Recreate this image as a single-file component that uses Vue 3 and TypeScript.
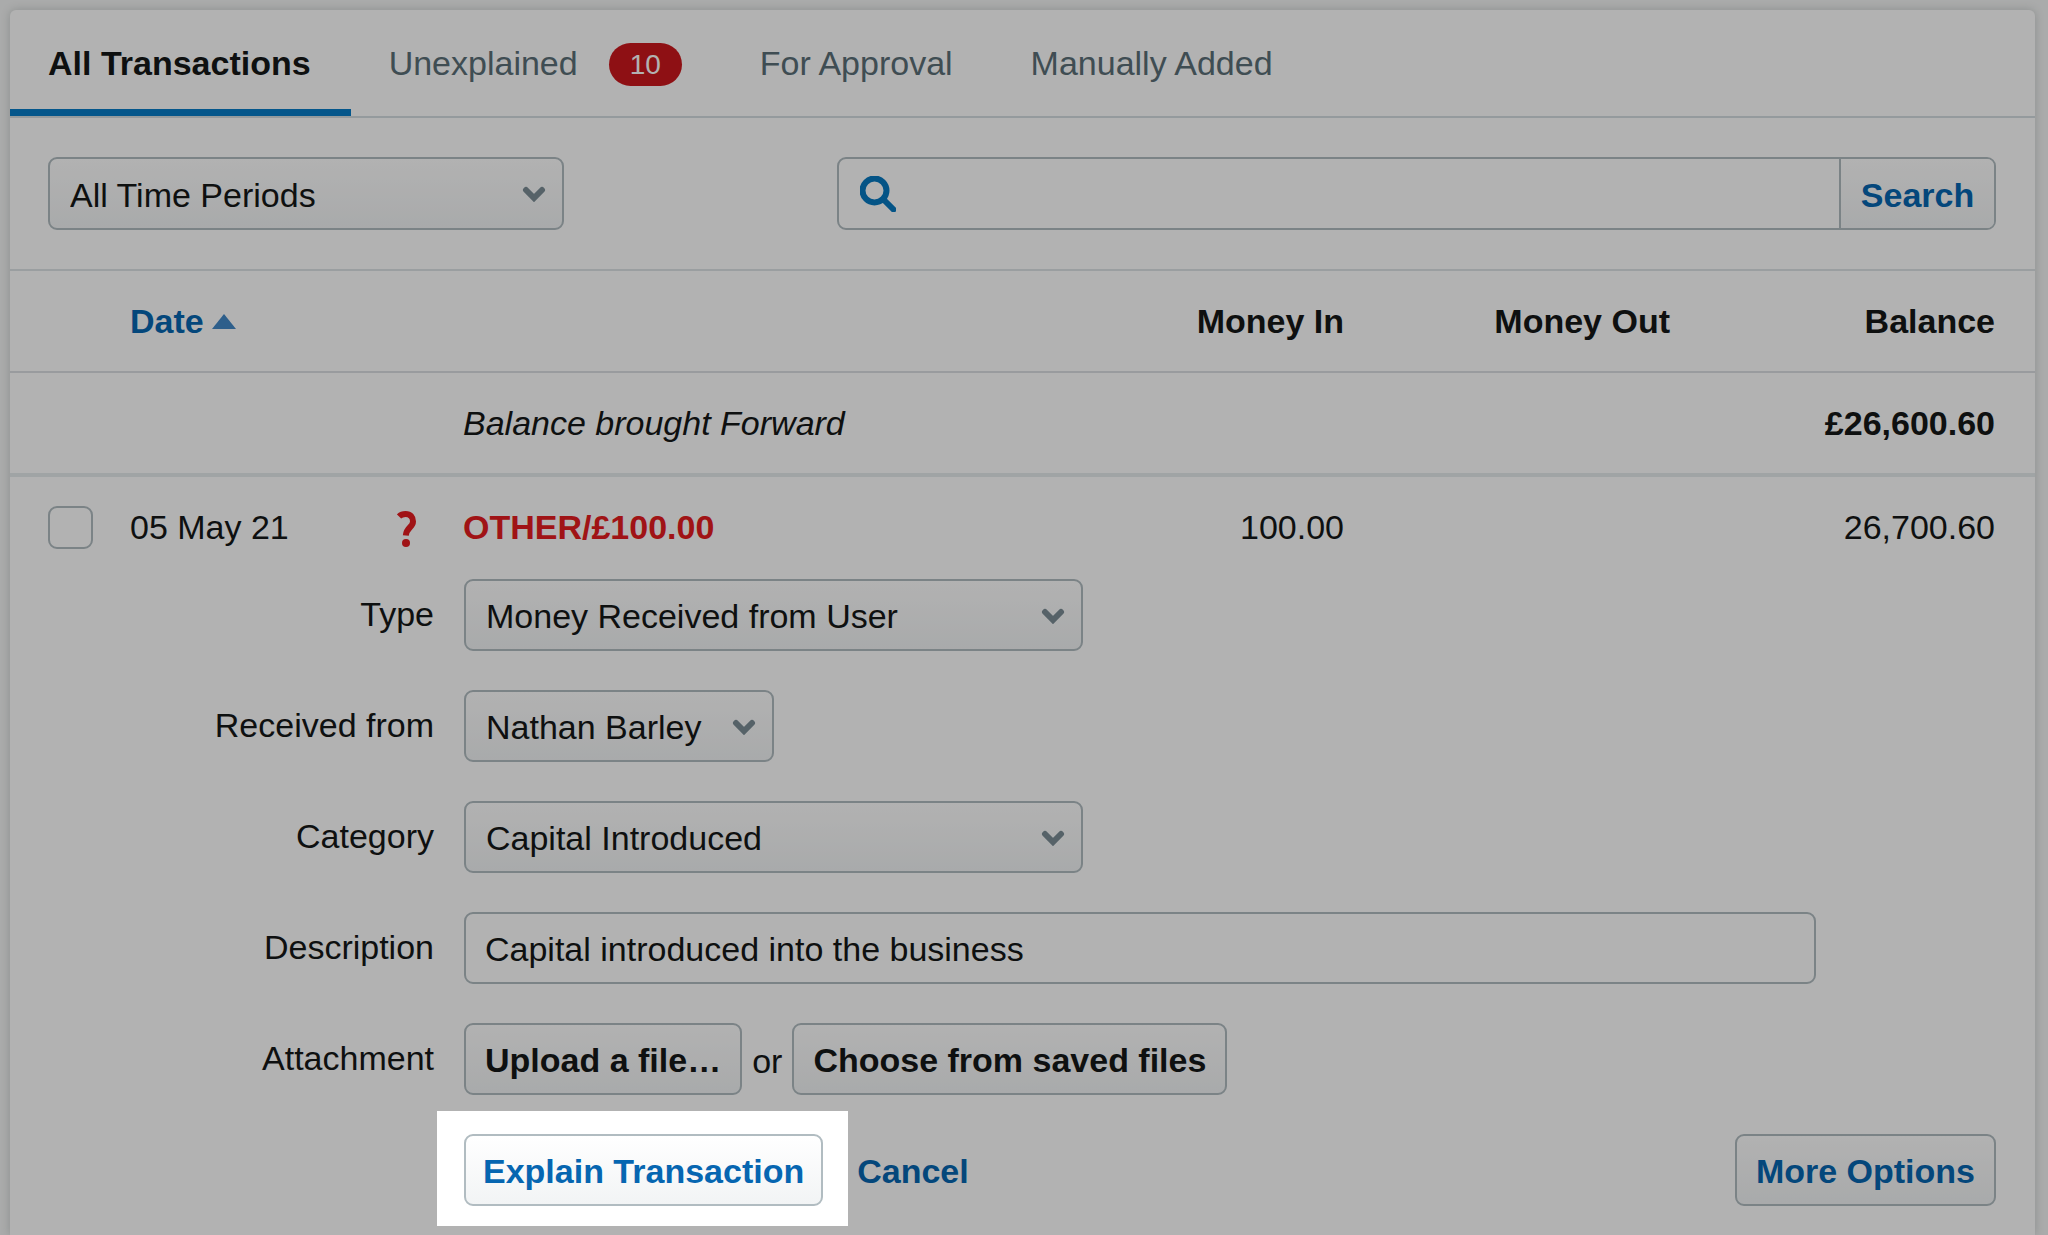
<script setup lang="ts">
import { ref } from 'vue'

interface Tab {
  label: string
  count?: number
}

const tabs: Tab[] = [
  { label: 'All Transactions' },
  { label: 'Unexplained', count: 10 },
  { label: 'For Approval' },
  { label: 'Manually Added' },
]
const activeTab = ref('All Transactions')

const period = ref('All Time Periods')
const query = ref('')
const selected = ref(false)
const kind = ref('Money Received from User')
const person = ref('Nathan Barley')
const category = ref('Capital Introduced')
const description = ref('Capital introduced into the business')
</script>

<template>
  <div class="page">
    <main class="card">
      <nav class="tabs">
        <a
          v-for="tab in tabs"
          :key="tab.label"
          href="#"
          class="tab"
          :class="{ active: tab.label === activeTab }"
          @click.prevent="activeTab = tab.label"
        >
          <span>{{ tab.label }}</span>
          <span v-if="tab.count" class="badge">{{ tab.count }}</span>
        </a>
      </nav>

      <div class="filters">
        <div class="select period">
          <select v-model="period" aria-label="Time period">
            <option>All Time Periods</option>
          </select>
          <svg class="chevron" viewBox="0 0 24 16"><path d="M4 4l8 8 8-8" /></svg>
        </div>
        <form class="search" @submit.prevent>
          <svg class="search-icon" viewBox="0 0 36 36">
            <circle cx="14.5" cy="14.5" r="12" />
            <path d="M23.5 23.5L33.5 33.5" />
          </svg>
          <input v-model="query" type="text" aria-label="Search transactions" />
          <button type="submit">Search</button>
        </form>
      </div>

      <table class="ledger">
        <colgroup>
          <col class="c-check" />
          <col class="c-date" />
          <col class="c-flag" />
          <col />
          <col class="c-money" />
          <col class="c-money" />
          <col class="c-balance" />
        </colgroup>
        <thead>
          <tr>
            <th></th>
            <th>
              <a href="#" class="sort" @click.prevent>Date<svg viewBox="0 0 24 15"><path d="M12 0L24 15H0z" /></svg></a>
            </th>
            <th></th>
            <th></th>
            <th class="num">Money In</th>
            <th class="num">Money Out</th>
            <th class="num last">Balance</th>
          </tr>
        </thead>
        <tbody>
          <tr class="forward">
            <td></td>
            <td></td>
            <td></td>
            <td><em>Balance brought Forward</em></td>
            <td></td>
            <td></td>
            <td class="num last"><strong>£26,600.60</strong></td>
          </tr>
          <tr>
            <td class="check"><input v-model="selected" type="checkbox" aria-label="Select transaction" /></td>
            <td>05 May 21</td>
            <td class="flag">
              <svg viewBox="0 0 20 36">
                <path d="M2 5.5C4 3.500 6 3 8.500 3C13.500 3 16 6 16 10.500C16 16.500 9.500 16 8.800 24.500" />
                <circle cx="9" cy="32" r="4" />
              </svg>
            </td>
            <td class="name">OTHER/£100.00</td>
            <td class="num">100.00</td>
            <td></td>
            <td class="num last">26,700.60</td>
          </tr>
        </tbody>
      </table>

      <form class="explain" @submit.prevent>
        <div class="row">
          <label for="type">Type</label>
          <div class="select wide">
            <select id="type" v-model="kind">
              <option>Money Received from User</option>
            </select>
            <svg class="chevron" viewBox="0 0 24 16"><path d="M4 4l8 8 8-8" /></svg>
          </div>
        </div>
        <div class="row">
          <label for="person">Received from</label>
          <div class="select narrow">
            <select id="person" v-model="person">
              <option>Nathan Barley</option>
            </select>
            <svg class="chevron" viewBox="0 0 24 16"><path d="M4 4l8 8 8-8" /></svg>
          </div>
        </div>
        <div class="row">
          <label for="category">Category</label>
          <div class="select wide">
            <select id="category" v-model="category">
              <option>Capital Introduced</option>
            </select>
            <svg class="chevron" viewBox="0 0 24 16"><path d="M4 4l8 8 8-8" /></svg>
          </div>
        </div>
        <div class="row">
          <label for="description">Description</label>
          <input id="description" v-model="description" class="text" type="text" />
        </div>
        <div class="row">
          <label for="upload">Attachment</label>
          <div class="files">
            <button id="upload" type="button" class="btn">Upload a file…</button>
            <span>or</span>
            <button type="button" class="btn">Choose from saved files</button>
          </div>
        </div>
        <div class="row actions">
          <div class="spotlight">
            <button type="submit" class="btn link">Explain Transaction</button>
          </div>
          <a href="#" class="cancel" @click.prevent>Cancel</a>
          <button type="button" class="btn link more">More Options</button>
        </div>
      </form>
    </main>
  </div>
</template>

<style>
body {
  margin: 0;
  background: #f4f5f5;
}
</style>

<style scoped>
.page {
  box-sizing: border-box;
  min-height: 100vh;
  display: flex;
  flex-direction: column;
  padding: 10px 13px 0 10px;
  overflow: hidden;
  font-family: 'Liberation Sans', Arial, sans-serif;
  font-size: 34px;
  line-height: 40px;
  color: #151717;
}
.page *,
.page *::before {
  box-sizing: border-box;
}
input,
select,
button {
  margin: 0;
  font: inherit;
  color: inherit;
  outline: none;
}
a {
  color: #0666b1;
  text-decoration: none;
}
.card {
  flex: 1;
  background: #fff;
  border-radius: 6px 6px 0 0;
  box-shadow: 0 0 10px rgba(40, 60, 55, 0.22);
}

.tabs {
  display: flex;
  height: 108px;
  border-bottom: 2px solid #d5dde1;
}
.tab {
  display: flex;
  align-items: center;
  gap: 31px;
  padding: 0 40px 0 38px;
  border-top: 6px solid transparent;
  border-bottom: 7px solid transparent;
  color: #5b6f77;
}
.tab.active {
  border-bottom-color: #067bc7;
  color: #151717;
  font-weight: bold;
}
.badge {
  height: 43px;
  margin-top: 3px;
  padding: 0 21px;
  border-radius: 22px;
  background: #cc181d;
  color: #fff;
  font-size: 28px;
  line-height: 43px;
}

.filters {
  display: flex;
  justify-content: space-between;
  gap: 40px;
  padding: 39px 39px 39px 38px;
  border-bottom: 2px solid #dde3e6;
}
.select {
  position: relative;
}
.select select {
  appearance: none;
  display: block;
  width: 100%;
  height: 72px;
  padding: 2px 60px 0 20px;
  border: 2px solid #b1bcc1;
  border-radius: 9px;
  background: linear-gradient(#fff, #f2f4f5);
}
.chevron {
  position: absolute;
  top: 29px;
  right: 18px;
  width: 24px;
  height: 16px;
  pointer-events: none;
  fill: none;
  stroke: #7b8d96;
  stroke-width: 6;
  stroke-linecap: round;
}
.period {
  width: 516px;
}
.filters .select select,
.search {
  height: 73px;
}
.search {
  display: flex;
  align-items: center;
  flex: 0 1 1159px;
  border: 2px solid #b1bcc1;
  border-radius: 9px;
}
.search-icon {
  width: 36px;
  height: 36px;
  margin-left: 21px;
  fill: none;
  stroke: #0679c1;
  stroke-width: 6;
  stroke-linecap: round;
}
.search input {
  flex: 1;
  min-width: 0;
  height: 100%;
  padding: 0 16px;
  border: 0;
  background: none;
}
.search button {
  height: 100%;
  width: 155px;
  padding: 2px 0 0;
  border: 0;
  border-left: 2px solid #b1bcc1;
  border-radius: 0 7px 7px 0;
  background: linear-gradient(#fff, #f2f4f5);
  color: #0666b1;
  font-weight: bold;
}

.ledger {
  width: 100%;
  table-layout: fixed;
  border-spacing: 0;
}
.c-check {
  width: 120px;
}
.c-date {
  width: 256px;
}
.c-flag {
  width: 77px;
}
.c-money {
  width: 326px;
}
.c-balance {
  width: 365px;
}
.ledger th,
.ledger td {
  height: 100px;
  padding: 0;
  text-align: left;
  vertical-align: middle;
  white-space: nowrap;
}
.ledger th {
  height: 102px;
  border-bottom: 2px solid #dbdee2;
}
.ledger .forward td {
  height: 104px;
  border-bottom: 4px solid #e6ebec;
}
.ledger .num {
  text-align: right;
}
.ledger .last {
  padding-right: 40px;
}
.sort {
  display: flex;
  align-items: center;
}
.sort svg {
  width: 24px;
  height: 15px;
  margin-left: 8px;
  fill: #4288c8;
}
.ledger .check {
  padding-left: 38px;
}
.check input {
  appearance: none;
  display: block;
  width: 45px;
  height: 43px;
  border: 2px solid #b1bcc1;
  border-radius: 9px;
}
.ledger .flag {
  padding-left: 11px;
}
.flag svg {
  display: block;
  width: 20px;
  height: 36px;
  margin-top: 4px;
  fill: #e51c20;
}
.flag path {
  fill: none;
  stroke: #e51c20;
  stroke-width: 6;
}
.name {
  color: #e51c20;
  font-weight: bold;
}

.explain {
  display: flex;
  flex-direction: column;
  gap: 39px;
  padding: 2px 39px 20px 38px;
}
.row {
  display: flex;
  align-items: center;
}
.row label {
  flex: none;
  width: 386px;
  margin-right: 30px;
  padding-bottom: 2px;
  text-align: right;
}
.wide {
  width: 619px;
}
.narrow {
  width: 310px;
}
.text {
  flex: 1;
  min-width: 0;
  height: 72px;
  margin-right: 180px;
  padding: 2px 19px 0;
  border: 2px solid #b1bcc1;
  border-radius: 9px;
  background: #fff;
}
.files {
  display: flex;
  align-items: center;
  gap: 10px;
}
.files span {
  padding-top: 4px;
}
.btn {
  height: 72px;
  padding: 2px 19px 0;
  border: 2px solid #b1bcc1;
  border-radius: 9px;
  background: linear-gradient(#fff, #f2f4f5);
  font-weight: bold;
  white-space: nowrap;
}
.link {
  color: #0666b1;
}
.actions {
  padding-left: 416px;
}
/* Dims the whole page except for the area around the submit button. */
.spotlight {
  position: relative;
}
.spotlight .btn {
  padding: 2px 17px 0;
}
.spotlight::before {
  content: '';
  position: absolute;
  inset: -23px -25px -20px -27px;
  z-index: 10;
  box-shadow: 0 0 0 4000px rgba(0, 0, 0, 0.3);
  pointer-events: none;
}
.cancel {
  margin-left: 34px;
  padding-top: 2px;
  font-weight: bold;
}
.more {
  margin-left: auto;
}
</style>
